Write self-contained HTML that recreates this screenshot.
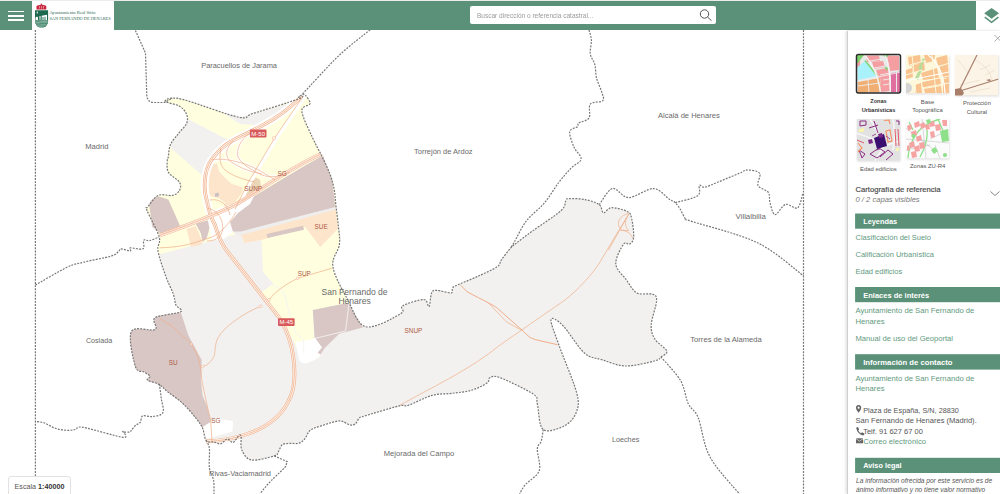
<!DOCTYPE html>
<html><head><meta charset="utf-8">
<style>
*{margin:0;padding:0;box-sizing:border-box}
html,body{width:1000px;height:494px;overflow:hidden;background:#fff;font-family:"Liberation Sans",sans-serif}
#map{position:absolute;left:0;top:0;width:1000px;height:494px}
#topline{position:absolute;left:0;top:0;width:1000px;height:1px;background:#ececec}
#hdr{position:absolute;left:0;top:1px;width:976px;height:29px;background:#5b9178}
#burger{position:absolute;left:8px;top:9.6px;width:16px;height:10px}
#burger i{position:absolute;left:0;width:16px;height:1.6px;background:#fff}
#logo{position:absolute;left:31.5px;top:1px;width:82px;height:29px;background:#fff}
#search{position:absolute;left:470px;top:5.2px;width:246px;height:17.8px;background:#fff;border-radius:2px}
#search span{position:absolute;left:6.5px;top:5.6px;font-size:7.3px;line-height:8px;color:#9a9a9a;white-space:nowrap;transform:scaleX(0.893);transform-origin:0 0}
#layersbtn{position:absolute;left:976px;top:1px;width:24px;height:29px;background:#fff}
#panel{position:absolute;left:847px;top:31px;width:153px;height:463px;background:#fff;border-left:1px solid #cfcfcf;box-shadow:-1px 0 3px rgba(0,0,0,.15)}
.t{position:absolute;white-space:nowrap;line-height:1}
.bar{position:absolute;left:8px;width:145px;height:15.2px;background:#5b9178;color:#fff;font-weight:bold;font-size:8.2px}
.bar span{position:absolute;left:8px;top:3.5px;white-space:nowrap}
.lnk{color:#5c9a7d;font-size:7.6px}
.gr{color:#555;font-size:7.6px}
</style></head><body>
<div id="map">
<svg width="1000" height="494" viewBox="0 0 1000 494">
<defs>
<style>
.bd{fill:none;stroke:#767676;stroke-width:1.2;stroke-dasharray:1.9 1.25}
.rd{fill:none;stroke:#f0ad88;stroke-width:0.7}
.rw{fill:none;stroke:#fff;stroke-linecap:round;stroke-linejoin:round}
.lb{font-family:"Liberation Sans",sans-serif;fill:#6a6a6a;font-size:7.5px}
.zl{font-family:"Liberation Sans",sans-serif;fill:#ad5a45;font-size:6.4px}
</style>
<clipPath id="lobeclip"><path d="M100,60 L400,60 L400,303 L349.3,303 L312.8,310.3 L314.7,337.6 L300,355.8 L292.6,339 L281.5,320.9 L270.3,304.7 L261.2,292.5 L273.4,283.4 L263.2,272.3 L261.5,240 L244.3,243 L241.2,232.9 L160.2,254.1 L100,270 Z"/></clipPath>
<clipPath id="suclip"><path d="M100,311 L180.6,311.8 L188.4,335.4 L201.7,360 L200.9,379.4 L202.5,395.6 L207.4,406.9 L210.6,419.9 L209.8,424.7 L204.1,426.3 L195,450 L100,450 Z"/></clipPath>
</defs>
<!-- municipality grey -->
<path id="muni" fill="#f2f1ef" d="M165.3,101.5 C164.1,100.2 168.5,98.2 172.4,98.1 C176.3,98.0 177.5,97.9 188.6,101.1 C199.7,104.3 228.4,115.3 239.2,117.3 C250.0,119.3 243.6,116.3 253.4,113.3 C263.2,110.3 289.8,102.2 298.0,99.1 C306.2,96.0 301.6,95.1 302.8,94.5 C304.1,93.9 304.3,93.9 305.5,95.4 C306.7,96.9 310.6,101.0 310.0,103.6 C309.4,106.2 301.5,105.4 301.8,110.9 C302.1,116.4 308.6,128.9 312.0,136.6 C315.4,144.2 319.1,150.4 322.2,156.8 C325.2,163.2 328.3,169.5 330.3,175.0 C332.3,180.5 333.4,185.1 334.3,190.0 C335.2,194.9 335.1,198.5 335.8,204.6 C336.5,210.7 337.8,219.7 338.4,226.4 C339.0,233.1 340.3,238.0 339.4,244.7 C338.5,251.4 331.5,257.4 332.9,266.5 C334.2,275.6 342.0,289.3 347.5,299.3 C353.0,309.3 356.8,324.3 365.7,326.7 C374.6,329.1 394.5,317.2 400.6,313.7 C406.8,310.2 398.8,308.3 402.6,305.9 C406.5,303.5 419.3,299.4 423.7,299.5 C428.1,299.6 427.7,307.7 429.0,306.6 C430.3,305.5 430.3,295.6 431.6,292.9 C432.9,290.2 433.5,290.3 436.8,290.3 C440.1,290.3 448.7,293.3 451.3,292.9 C453.9,292.4 451.1,289.1 452.6,287.6 C454.1,286.1 456.1,285.7 460.5,283.7 C464.9,281.7 472.9,278.6 479.0,275.8 C485.1,273.0 493.7,269.2 497.4,266.6 C501.1,264.0 499.1,263.1 501.3,260.0 C503.5,256.9 508.0,251.0 510.5,248.2 C513.0,245.4 512.6,246.0 516.3,243.1 C520.0,240.2 525.1,236.4 532.5,231.0 C539.9,225.6 555.3,215.8 560.9,210.7 C566.5,205.6 564.5,202.6 565.9,200.6 C567.2,198.6 565.8,198.8 569.0,198.6 C572.2,198.4 580.1,198.6 585.1,199.6 C590.1,200.6 596.2,202.5 599.3,204.7 C602.3,206.9 601.4,212.3 603.4,212.8 C605.4,213.3 607.5,207.9 611.5,207.7 C615.5,207.5 624.2,209.8 627.6,211.7 C631.0,213.5 630.7,214.6 631.7,218.8 C632.7,223.0 634.0,232.8 633.7,237.0 C633.4,241.2 631.4,242.9 629.7,244.1 C628.0,245.3 625.9,240.8 623.6,244.1 C621.3,247.4 615.3,258.1 615.8,264.0 C616.2,269.9 622.8,274.9 626.3,279.7 C629.8,284.5 632.4,290.5 636.8,292.9 C641.2,295.3 649.3,292.9 652.6,294.2 C655.9,295.5 656.8,295.7 656.6,300.8 C656.4,305.9 651.5,318.6 651.2,325.0 C650.9,331.4 652.4,334.9 655.0,339.2 C657.6,343.5 665.8,348.0 666.8,351.0 C667.8,354.0 663.0,355.4 661.0,357.0 C659.0,358.6 660.9,359.3 655.0,360.8 C649.1,362.3 634.4,366.2 625.6,366.0 C616.8,365.8 608.9,361.9 602.0,359.7 C595.1,357.5 590.9,358.7 584.4,353.0 C577.9,347.3 568.4,331.1 562.8,325.5 C557.2,319.9 551.6,316.4 551.0,319.6 C550.4,322.9 554.6,332.9 558.9,345.0 C563.1,357.1 573.6,381.1 576.5,392.2 C579.4,403.3 578.5,406.3 576.5,411.9 C574.5,417.5 570.3,422.7 564.8,425.6 C559.2,428.5 547.8,433.1 543.2,429.5 C538.6,425.9 538.9,409.9 537.3,404.0 C535.7,398.1 539.6,398.6 533.4,394.2 C527.2,389.8 507.2,380.4 500.0,377.7 C492.8,374.9 492.2,376.8 490.0,377.7 C487.8,378.6 490.1,380.9 487.0,383.0 C483.9,385.1 477.2,388.6 471.3,390.3 C465.4,392.0 458.2,392.5 451.6,393.4 C445.1,394.2 439.2,393.4 432.0,395.4 C424.8,397.4 414.1,403.4 408.5,405.2 C402.9,407.0 405.8,404.2 398.6,406.0 C391.4,407.8 371.8,413.8 365.3,415.8 C358.8,417.8 361.0,416.5 359.4,417.8 C357.8,419.1 357.1,422.5 355.5,423.7 C353.9,424.9 352.2,425.4 349.6,424.9 C347.0,424.4 344.3,420.8 339.7,420.9 C335.1,421.0 326.9,424.0 322.0,425.6 C317.1,427.2 313.2,428.0 310.3,430.3 C307.4,432.6 306.4,437.2 304.4,439.4 C302.4,441.6 300.8,442.6 298.5,443.3 C296.2,444.0 293.2,443.2 290.5,443.4 C287.8,443.6 284.4,443.2 282.4,444.6 C280.4,446.0 279.6,450.0 278.3,451.9 C277.0,453.8 278.8,454.5 274.3,455.9 C269.9,457.2 257.0,460.9 251.6,460.0 C246.2,459.1 243.7,454.1 241.9,450.2 C240.1,446.3 241.6,438.9 241.0,436.5 C240.4,434.1 239.9,435.0 238.6,436.0 C237.3,437.0 234.9,442.0 233.0,442.5 C231.1,443.0 229.3,438.7 227.3,438.9 C225.3,439.1 223.0,443.3 220.8,443.8 C218.6,444.3 216.7,442.7 214.3,442.1 C211.9,441.6 208.2,442.9 206.2,440.5 C204.2,438.1 204.2,431.7 202.5,428.0 C200.8,424.3 199.2,422.4 196.0,418.3 C192.8,414.2 187.7,408.0 183.1,403.7 C178.5,399.4 172.6,395.6 168.5,392.4 C164.4,389.2 162.3,386.3 158.8,384.3 C155.3,382.3 149.0,381.6 147.5,380.2 C146.0,378.8 150.5,377.5 150.0,376.2 C149.5,374.9 146.7,373.7 144.3,372.1 C141.9,370.5 137.6,373.3 135.4,366.5 C133.2,359.7 128.1,337.6 131.4,331.4 C134.7,325.2 151.1,331.8 155.0,329.5 C158.9,327.2 150.7,320.6 155.0,317.7 C159.3,314.8 177.1,313.9 180.6,311.8 C184.1,309.7 177.1,308.0 175.9,305.0 C174.7,302.0 175.0,298.8 173.3,294.0 C171.6,289.2 168.2,283.2 165.7,276.0 C163.1,268.8 159.1,257.4 158.0,250.9 C156.9,244.4 161.0,243.6 159.2,236.9 C157.4,230.2 148.9,215.7 147.1,210.6 C145.2,205.5 146.2,209.1 148.1,206.6 C149.9,204.1 154.1,197.3 158.2,195.4 C162.2,193.5 168.8,196.2 172.4,195.4 C176.0,194.6 178.3,192.6 179.5,190.4 C180.7,188.2 181.4,185.4 179.5,182.3 C177.6,179.2 170.3,175.8 168.3,172.1 C166.3,168.4 167.3,162.6 167.3,160.0 C167.3,157.4 167.8,159.4 168.3,156.8 C168.8,154.2 168.7,148.6 170.4,144.7 C172.1,140.8 175.8,137.1 178.5,133.5 C181.2,129.9 185.2,126.6 186.6,123.4 C187.9,120.2 187.8,117.2 186.6,114.3 C185.4,111.4 183.1,108.3 179.5,106.2 C175.9,104.1 166.5,102.8 165.3,101.5 Z"/>
<!-- yellow lobe -->
<path fill="#ffffe0" clip-path="url(#lobeclip)" d="M165.3,101.5 C164.1,100.2 168.5,98.2 172.4,98.1 C176.3,98.0 177.5,97.9 188.6,101.1 C199.7,104.3 228.4,115.3 239.2,117.3 C250.0,119.3 243.6,116.3 253.4,113.3 C263.2,110.3 289.8,102.2 298.0,99.1 C306.2,96.0 301.6,95.1 302.8,94.5 C304.1,93.9 304.3,93.9 305.5,95.4 C306.7,96.9 310.6,101.0 310.0,103.6 C309.4,106.2 301.5,105.4 301.8,110.9 C302.1,116.4 308.6,128.9 312.0,136.6 C315.4,144.2 319.1,150.4 322.2,156.8 C325.2,163.2 328.3,169.5 330.3,175.0 C332.3,180.5 333.4,185.1 334.3,190.0 C335.2,194.9 335.1,198.5 335.8,204.6 C336.5,210.7 337.8,219.7 338.4,226.4 C339.0,233.1 340.3,238.0 339.4,244.7 C338.5,251.4 331.5,257.4 332.9,266.5 C334.2,275.6 342.0,289.3 347.5,299.3 C353.0,309.3 356.8,324.3 365.7,326.7 C374.6,329.1 394.5,317.2 400.6,313.7 C406.8,310.2 398.8,308.3 402.6,305.9 C406.5,303.5 419.3,299.4 423.7,299.5 C428.1,299.6 427.7,307.7 429.0,306.6 C430.3,305.5 430.3,295.6 431.6,292.9 C432.9,290.2 433.5,290.3 436.8,290.3 C440.1,290.3 448.7,293.3 451.3,292.9 C453.9,292.4 451.1,289.1 452.6,287.6 C454.1,286.1 456.1,285.7 460.5,283.7 C464.9,281.7 472.9,278.6 479.0,275.8 C485.1,273.0 493.7,269.2 497.4,266.6 C501.1,264.0 499.1,263.1 501.3,260.0 C503.5,256.9 508.0,251.0 510.5,248.2 C513.0,245.4 512.6,246.0 516.3,243.1 C520.0,240.2 525.1,236.4 532.5,231.0 C539.9,225.6 555.3,215.8 560.9,210.7 C566.5,205.6 564.5,202.6 565.9,200.6 C567.2,198.6 565.8,198.8 569.0,198.6 C572.2,198.4 580.1,198.6 585.1,199.6 C590.1,200.6 596.2,202.5 599.3,204.7 C602.3,206.9 601.4,212.3 603.4,212.8 C605.4,213.3 607.5,207.9 611.5,207.7 C615.5,207.5 624.2,209.8 627.6,211.7 C631.0,213.5 630.7,214.6 631.7,218.8 C632.7,223.0 634.0,232.8 633.7,237.0 C633.4,241.2 631.4,242.9 629.7,244.1 C628.0,245.3 625.9,240.8 623.6,244.1 C621.3,247.4 615.3,258.1 615.8,264.0 C616.2,269.9 622.8,274.9 626.3,279.7 C629.8,284.5 632.4,290.5 636.8,292.9 C641.2,295.3 649.3,292.9 652.6,294.2 C655.9,295.5 656.8,295.7 656.6,300.8 C656.4,305.9 651.5,318.6 651.2,325.0 C650.9,331.4 652.4,334.9 655.0,339.2 C657.6,343.5 665.8,348.0 666.8,351.0 C667.8,354.0 663.0,355.4 661.0,357.0 C659.0,358.6 660.9,359.3 655.0,360.8 C649.1,362.3 634.4,366.2 625.6,366.0 C616.8,365.8 608.9,361.9 602.0,359.7 C595.1,357.5 590.9,358.7 584.4,353.0 C577.9,347.3 568.4,331.1 562.8,325.5 C557.2,319.9 551.6,316.4 551.0,319.6 C550.4,322.9 554.6,332.9 558.9,345.0 C563.1,357.1 573.6,381.1 576.5,392.2 C579.4,403.3 578.5,406.3 576.5,411.9 C574.5,417.5 570.3,422.7 564.8,425.6 C559.2,428.5 547.8,433.1 543.2,429.5 C538.6,425.9 538.9,409.9 537.3,404.0 C535.7,398.1 539.6,398.6 533.4,394.2 C527.2,389.8 507.2,380.4 500.0,377.7 C492.8,374.9 492.2,376.8 490.0,377.7 C487.8,378.6 490.1,380.9 487.0,383.0 C483.9,385.1 477.2,388.6 471.3,390.3 C465.4,392.0 458.2,392.5 451.6,393.4 C445.1,394.2 439.2,393.4 432.0,395.4 C424.8,397.4 414.1,403.4 408.5,405.2 C402.9,407.0 405.8,404.2 398.6,406.0 C391.4,407.8 371.8,413.8 365.3,415.8 C358.8,417.8 361.0,416.5 359.4,417.8 C357.8,419.1 357.1,422.5 355.5,423.7 C353.9,424.9 352.2,425.4 349.6,424.9 C347.0,424.4 344.3,420.8 339.7,420.9 C335.1,421.0 326.9,424.0 322.0,425.6 C317.1,427.2 313.2,428.0 310.3,430.3 C307.4,432.6 306.4,437.2 304.4,439.4 C302.4,441.6 300.8,442.6 298.5,443.3 C296.2,444.0 293.2,443.2 290.5,443.4 C287.8,443.6 284.4,443.2 282.4,444.6 C280.4,446.0 279.6,450.0 278.3,451.9 C277.0,453.8 278.8,454.5 274.3,455.9 C269.9,457.2 257.0,460.9 251.6,460.0 C246.2,459.1 243.7,454.1 241.9,450.2 C240.1,446.3 241.6,438.9 241.0,436.5 C240.4,434.1 239.9,435.0 238.6,436.0 C237.3,437.0 234.9,442.0 233.0,442.5 C231.1,443.0 229.3,438.7 227.3,438.9 C225.3,439.1 223.0,443.3 220.8,443.8 C218.6,444.3 216.7,442.7 214.3,442.1 C211.9,441.6 208.2,442.9 206.2,440.5 C204.2,438.1 204.2,431.7 202.5,428.0 C200.8,424.3 199.2,422.4 196.0,418.3 C192.8,414.2 187.7,408.0 183.1,403.7 C178.5,399.4 172.6,395.6 168.5,392.4 C164.4,389.2 162.3,386.3 158.8,384.3 C155.3,382.3 149.0,381.6 147.5,380.2 C146.0,378.8 150.5,377.5 150.0,376.2 C149.5,374.9 146.7,373.7 144.3,372.1 C141.9,370.5 137.6,373.3 135.4,366.5 C133.2,359.7 128.1,337.6 131.4,331.4 C134.7,325.2 151.1,331.8 155.0,329.5 C158.9,327.2 150.7,320.6 155.0,317.7 C159.3,314.8 177.1,313.9 180.6,311.8 C184.1,309.7 177.1,308.0 175.9,305.0 C174.7,302.0 175.0,298.8 173.3,294.0 C171.6,289.2 168.2,283.2 165.7,276.0 C163.1,268.8 159.1,257.4 158.0,250.9 C156.9,244.4 161.0,243.6 159.2,236.9 C157.4,230.2 148.9,215.7 147.1,210.6 C145.2,205.5 146.2,209.1 148.1,206.6 C149.9,204.1 154.1,197.3 158.2,195.4 C162.2,193.5 168.8,196.2 172.4,195.4 C176.0,194.6 178.3,192.6 179.5,190.4 C180.7,188.2 181.4,185.4 179.5,182.3 C177.6,179.2 170.3,175.8 168.3,172.1 C166.3,168.4 167.3,162.6 167.3,160.0 C167.3,157.4 167.8,159.4 168.3,156.8 C168.8,154.2 168.7,148.6 170.4,144.7 C172.1,140.8 175.8,137.1 178.5,133.5 C181.2,129.9 185.2,126.6 186.6,123.4 C187.9,120.2 187.8,117.2 186.6,114.3 C185.4,111.4 183.1,108.3 179.5,106.2 C175.9,104.1 166.5,102.8 165.3,101.5 Z"/>
<!-- grey stripes in lobe -->
<path fill="#f2f1ef" d="M186.6,118.3 L229,140.6 L218,150 L208,163 L203,176 L171.4,148.7 L170.4,144.7 L178.5,133.5 L186.6,123.4 Z"/>
<path fill="#f2f1ef" d="M223,113.3 L239.2,117.3 L253.4,113.3 L294,102 L288,108 L270,119 L255,125 L240,124 Z"/>
<!-- dark pink SG big -->
<path fill="#d9c7c5" d="M320.5,156.8 L323.2,156 L332.3,180.2 L335.3,207.6 L241.2,231.9 L233.1,231.9 C229,229 227.5,224 228.5,218 C229.5,213 232,209 236.5,206.5 L262,191.5 L280,180.5 L300,168.5 Z"/>
<path fill="#efeeed" d="M233,231.5 L241.2,231.4 L335.3,207 L336,211 L241.2,235.4 L236,235 Z"/>
<!-- orange SUE strip -->
<path fill="#fde5cc" d="M241.2,234.9 L335.8,209.6 L338,228.8 L320.2,247 L305,226.8 L261.5,240 L244.3,243 Z"/>
<path fill="#d9c7c5" d="M266.5,233.9 L303,225.8 L304,229.8 L267.5,237.9 Z"/>
<!-- small pink left -->
<path fill="#d9c7c5" d="M149.1,204 Q152,197 159.2,196.4 L168.3,199.5 L180.5,226.8 L161.3,233.9 L152.1,226.8 Z"/>
<!-- small pink center-left -->
<path fill="#d9c7c5" d="M195.7,223.8 L209.8,219.7 L209.8,226.8 L206.8,237.9 L202.8,242 L200.7,232.9 Z"/>
<!-- orange band left -->
<path fill="#fde5cc" d="M186.6,229 L195.7,226 L202.8,242 L200.7,245 L191,247 Z"/>
<!-- SUNP orange -->
<path fill="#fde5cc" d="M209.2,164.2 L217,163.5 L219,171.2 L224.7,177.6 L231.8,184 L237.5,185.4 L243.2,188.2 L242,192.5 L236,201 L227.6,208 L224,206.7 L224.7,202.4 L218.4,198.2 L212,198.5 L208.5,192 L208,175 Z"/>
<path fill="#ffffe0" d="M210,196 L218.4,198.2 L224.7,202.4 L224,206.7 L215,209 L210,207 Z"/>
<path fill="#c9c0c4" d="M214.8,193.5 L218.5,192.5 L219,196.2 L215.3,197 Z"/>
<path fill="#ebd6b8" d="M244.6,188.2 L255.9,177.6 L260,179.7 L260.9,185.4 L251.7,195.3 L243.9,199.6 Z"/>
<!-- dark pink lower (Henares) -->
<path fill="#d9c7c5" d="M312.8,310 L348.3,302.8 L362.9,327.4 L339.2,333.7 L324.6,348.3 L320.5,354.5 L317.5,352.5 L321.9,347.4 L314.6,337.4 Z"/>
<path fill="none" stroke="#f4f2f2" stroke-width="0.9" d="M349,303.5 L345.6,331 L314.6,338.5 L302,355"/>
<!-- white lower area near Henares -->
<path fill="#fff" d="M295.5,342 L312.8,339.2 L314.6,337.4 L321.9,347.4 L317.5,352.5 L321,355.6 C318,359 313,361 306,363.5 C302,364 299,361 298.5,357 C297.5,352 296.5,346 295.5,342 Z"/>
<path fill="none" stroke="#f5f5f2" stroke-width="1" d="M270,283.6 L281,289 C284,294 286,298 286.4,301.9 L290,316.4 L295.5,332.8 L303.7,340 L303.7,352.9"/>
<!-- SU dark pink -->
<path fill="#d9c7c5" clip-path="url(#suclip)" d="M165.3,101.5 C164.1,100.2 168.5,98.2 172.4,98.1 C176.3,98.0 177.5,97.9 188.6,101.1 C199.7,104.3 228.4,115.3 239.2,117.3 C250.0,119.3 243.6,116.3 253.4,113.3 C263.2,110.3 289.8,102.2 298.0,99.1 C306.2,96.0 301.6,95.1 302.8,94.5 C304.1,93.9 304.3,93.9 305.5,95.4 C306.7,96.9 310.6,101.0 310.0,103.6 C309.4,106.2 301.5,105.4 301.8,110.9 C302.1,116.4 308.6,128.9 312.0,136.6 C315.4,144.2 319.1,150.4 322.2,156.8 C325.2,163.2 328.3,169.5 330.3,175.0 C332.3,180.5 333.4,185.1 334.3,190.0 C335.2,194.9 335.1,198.5 335.8,204.6 C336.5,210.7 337.8,219.7 338.4,226.4 C339.0,233.1 340.3,238.0 339.4,244.7 C338.5,251.4 331.5,257.4 332.9,266.5 C334.2,275.6 342.0,289.3 347.5,299.3 C353.0,309.3 356.8,324.3 365.7,326.7 C374.6,329.1 394.5,317.2 400.6,313.7 C406.8,310.2 398.8,308.3 402.6,305.9 C406.5,303.5 419.3,299.4 423.7,299.5 C428.1,299.6 427.7,307.7 429.0,306.6 C430.3,305.5 430.3,295.6 431.6,292.9 C432.9,290.2 433.5,290.3 436.8,290.3 C440.1,290.3 448.7,293.3 451.3,292.9 C453.9,292.4 451.1,289.1 452.6,287.6 C454.1,286.1 456.1,285.7 460.5,283.7 C464.9,281.7 472.9,278.6 479.0,275.8 C485.1,273.0 493.7,269.2 497.4,266.6 C501.1,264.0 499.1,263.1 501.3,260.0 C503.5,256.9 508.0,251.0 510.5,248.2 C513.0,245.4 512.6,246.0 516.3,243.1 C520.0,240.2 525.1,236.4 532.5,231.0 C539.9,225.6 555.3,215.8 560.9,210.7 C566.5,205.6 564.5,202.6 565.9,200.6 C567.2,198.6 565.8,198.8 569.0,198.6 C572.2,198.4 580.1,198.6 585.1,199.6 C590.1,200.6 596.2,202.5 599.3,204.7 C602.3,206.9 601.4,212.3 603.4,212.8 C605.4,213.3 607.5,207.9 611.5,207.7 C615.5,207.5 624.2,209.8 627.6,211.7 C631.0,213.5 630.7,214.6 631.7,218.8 C632.7,223.0 634.0,232.8 633.7,237.0 C633.4,241.2 631.4,242.9 629.7,244.1 C628.0,245.3 625.9,240.8 623.6,244.1 C621.3,247.4 615.3,258.1 615.8,264.0 C616.2,269.9 622.8,274.9 626.3,279.7 C629.8,284.5 632.4,290.5 636.8,292.9 C641.2,295.3 649.3,292.9 652.6,294.2 C655.9,295.5 656.8,295.7 656.6,300.8 C656.4,305.9 651.5,318.6 651.2,325.0 C650.9,331.4 652.4,334.9 655.0,339.2 C657.6,343.5 665.8,348.0 666.8,351.0 C667.8,354.0 663.0,355.4 661.0,357.0 C659.0,358.6 660.9,359.3 655.0,360.8 C649.1,362.3 634.4,366.2 625.6,366.0 C616.8,365.8 608.9,361.9 602.0,359.7 C595.1,357.5 590.9,358.7 584.4,353.0 C577.9,347.3 568.4,331.1 562.8,325.5 C557.2,319.9 551.6,316.4 551.0,319.6 C550.4,322.9 554.6,332.9 558.9,345.0 C563.1,357.1 573.6,381.1 576.5,392.2 C579.4,403.3 578.5,406.3 576.5,411.9 C574.5,417.5 570.3,422.7 564.8,425.6 C559.2,428.5 547.8,433.1 543.2,429.5 C538.6,425.9 538.9,409.9 537.3,404.0 C535.7,398.1 539.6,398.6 533.4,394.2 C527.2,389.8 507.2,380.4 500.0,377.7 C492.8,374.9 492.2,376.8 490.0,377.7 C487.8,378.6 490.1,380.9 487.0,383.0 C483.9,385.1 477.2,388.6 471.3,390.3 C465.4,392.0 458.2,392.5 451.6,393.4 C445.1,394.2 439.2,393.4 432.0,395.4 C424.8,397.4 414.1,403.4 408.5,405.2 C402.9,407.0 405.8,404.2 398.6,406.0 C391.4,407.8 371.8,413.8 365.3,415.8 C358.8,417.8 361.0,416.5 359.4,417.8 C357.8,419.1 357.1,422.5 355.5,423.7 C353.9,424.9 352.2,425.4 349.6,424.9 C347.0,424.4 344.3,420.8 339.7,420.9 C335.1,421.0 326.9,424.0 322.0,425.6 C317.1,427.2 313.2,428.0 310.3,430.3 C307.4,432.6 306.4,437.2 304.4,439.4 C302.4,441.6 300.8,442.6 298.5,443.3 C296.2,444.0 293.2,443.2 290.5,443.4 C287.8,443.6 284.4,443.2 282.4,444.6 C280.4,446.0 279.6,450.0 278.3,451.9 C277.0,453.8 278.8,454.5 274.3,455.9 C269.9,457.2 257.0,460.9 251.6,460.0 C246.2,459.1 243.7,454.1 241.9,450.2 C240.1,446.3 241.6,438.9 241.0,436.5 C240.4,434.1 239.9,435.0 238.6,436.0 C237.3,437.0 234.9,442.0 233.0,442.5 C231.1,443.0 229.3,438.7 227.3,438.9 C225.3,439.1 223.0,443.3 220.8,443.8 C218.6,444.3 216.7,442.7 214.3,442.1 C211.9,441.6 208.2,442.9 206.2,440.5 C204.2,438.1 204.2,431.7 202.5,428.0 C200.8,424.3 199.2,422.4 196.0,418.3 C192.8,414.2 187.7,408.0 183.1,403.7 C178.5,399.4 172.6,395.6 168.5,392.4 C164.4,389.2 162.3,386.3 158.8,384.3 C155.3,382.3 149.0,381.6 147.5,380.2 C146.0,378.8 150.5,377.5 150.0,376.2 C149.5,374.9 146.7,373.7 144.3,372.1 C141.9,370.5 137.6,373.3 135.4,366.5 C133.2,359.7 128.1,337.6 131.4,331.4 C134.7,325.2 151.1,331.8 155.0,329.5 C158.9,327.2 150.7,320.6 155.0,317.7 C159.3,314.8 177.1,313.9 180.6,311.8 C184.1,309.7 177.1,308.0 175.9,305.0 C174.7,302.0 175.0,298.8 173.3,294.0 C171.6,289.2 168.2,283.2 165.7,276.0 C163.1,268.8 159.1,257.4 158.0,250.9 C156.9,244.4 161.0,243.6 159.2,236.9 C157.4,230.2 148.9,215.7 147.1,210.6 C145.2,205.5 146.2,209.1 148.1,206.6 C149.9,204.1 154.1,197.3 158.2,195.4 C162.2,193.5 168.8,196.2 172.4,195.4 C176.0,194.6 178.3,192.6 179.5,190.4 C180.7,188.2 181.4,185.4 179.5,182.3 C177.6,179.2 170.3,175.8 168.3,172.1 C166.3,168.4 167.3,162.6 167.3,160.0 C167.3,157.4 167.8,159.4 168.3,156.8 C168.8,154.2 168.7,148.6 170.4,144.7 C172.1,140.8 175.8,137.1 178.5,133.5 C181.2,129.9 185.2,126.6 186.6,123.4 C187.9,120.2 187.8,117.2 186.6,114.3 C185.4,111.4 183.1,108.3 179.5,106.2 C175.9,104.1 166.5,102.8 165.3,101.5 Z"/>
<!-- white SG lower -->
<path fill="#fff" d="M203,426.7 L216,418.6 L233,421 L232.5,431.6 L206.2,438.9 Z"/>
<!-- white road casings -->
<path class="rw" stroke-width="3" d="M250,133 C240,140 236,150 238,157 C242,165 252,170 262,175 C270,178 280,177 290,172 M233,141 C226,148 225,155 229,160 C235,166 250,172 262,174 M212,160 C220,158 232,160 245,164 C256,168 266,174 275,180"/>
<path fill="#fff" d="M206,212 L226,206 L240,202 L255,194 L250,204 L238,213 L230,222 L233,232 L222,240 L212,240 Z"/>
<path class="rw" stroke-width="8" d="M302,96 C292,106 282,114 273,119.3 C265,124 250,132 241,136.3 C233,140 222,147 216.7,153.3 C211,159 207,166 205.5,175 C204,185 205,195 206.8,200.5 C209,212 211,218 214.9,224.8"/>
<path class="rw" stroke-width="3.4" d="M159.7,235.5 C190,224 220,214 240,202 C260,190 290,168 321,154"/>
<path class="rw" stroke-width="3.5" d="M304,98 L276.5,138.2 L251,181 L237,209"/>
<!-- roads -->
<path fill="none" stroke="#f2b491" stroke-width="3.8" d="M302,96 C292,106 282,114 273,119.3 C265,124 250,132 241,136.3 C233,140 222,147 216.7,153.3 C211,159 207,166 205.5,175 C204,185 205,195 206.8,200.5 C209,212 211,218 214.9,224.8 C218,235 222,245 227,251 L261.2,294.5 C270,306 276,313 281.5,320.9 C288,333 291.6,345 293,355 C296,375 294,392 288,402 C279,420 262,430 241,436 C228,440 215,441 206,441.5"/>
<path fill="none" stroke="#fff" stroke-width="2.4" d="M302,96 C292,106 282,114 273,119.3 C265,124 250,132 241,136.3 C233,140 222,147 216.7,153.3 C211,159 207,166 205.5,175 C204,185 205,195 206.8,200.5 C209,212 211,218 214.9,224.8 C218,235 222,245 227,251 L261.2,294.5 C270,306 276,313 281.5,320.9 C288,333 291.6,345 293,355 C296,375 294,392 288,402 C279,420 262,430 241,436 C228,440 215,441 206,441.5" opacity=".9"/>
<path fill="none" stroke="#f2b491" stroke-width="0.9" d="M302,96 C292,106 282,114 273,119.3 C265,124 250,132 241,136.3 C233,140 222,147 216.7,153.3 C211,159 207,166 205.5,175 C204,185 205,195 206.8,200.5 C209,212 211,218 214.9,224.8 C218,235 222,245 227,251 L261.2,294.5 C270,306 276,313 281.5,320.9 C288,333 291.6,345 293,355 C296,375 294,392 288,402 C279,420 262,430 241,436 C228,440 215,441 206,441.5"/>

<path fill="none" stroke="#f2b491" stroke-width="4" d="M159.7,235.5 C190,224 220,214 240,202 C260,190 290,168 321,154"/>
<path fill="none" stroke="#fff" stroke-width="2.7" d="M159.7,235.5 C190,224 220,214 240,202 C260,190 290,168 321,154" opacity=".9"/><path fill="none" stroke="#f2b491" stroke-width="1.3" d="M159.7,235.5 C190,224 220,214 240,202 C260,190 290,168 321,154"/><path fill="none" stroke="#fff" stroke-width="0.4" d="M159.7,235.5 C190,224 220,214 240,202 C260,190 290,168 321,154" opacity=".7"/>

<g class="rd">
<path d="M302,98 L274.5,138.2 L249,181 L235,209"/>
<path d="M159.7,247.8 C175,247.5 190,245 201,240.5 C206,239 210,238 214,236 C224,230 230,222 236,212"/>
<path d="M250,133 C240,140 236,150 238,157 C242,165 252,170 262,175 C270,178 280,177 290,172"/>
<path d="M233,141 C226,148 225,155 229,160 C235,166 250,172 262,174 M221,148 C219,160 220,165 225,170 C232,176 245,180 255,182"/>
<path d="M212,160 C220,158 232,160 245,164 C256,168 266,174 275,180"/>
<path d="M207,208 C215,210 222,215 223,228 C222,238 214,241 207,241"/>
<path d="M210,200 C220,198 228,205 230,215"/>
<path d="M269.3,299.6 C275,292 283.5,285.4 297.7,278.3 L332,268.2"/>
<path d="M260.8,306.2 C252,310 244,314 236,320 C226,327 220,333 217,340 C214,348 216,354 213,358 C210,363 206,366 202.5,366.7"/>
<path d="M160,318.8 L172,325.9 L191.4,344.1 C199,355 201.7,370 201.7,380 L207.4,406.9 L210.6,419.9 L212,441"/>
<path d="M398.6,406 C430,388 470,370 500,345 L539,318 L565,300 C580,288 592,274.5 600,262 L616,235 L629,214"/>
<path d="M460,284.6 L467.3,291.9 C475,296 482,299.5 488.3,302.8 C492,305 495,306 497.4,308.3 L521,329.2 C525,333 528,336 530.1,337.4 C533,339 535,339.5 537.4,340.1 L557.5,344.7" style="stroke-width:1"/>
<path d="M488.3,302.8 L506.5,321.9 L521,330"/>
<path d="M628.4,213.5 C621,215 617,221 619,226.5 C620.5,230 624,231 629,230.5 M620.5,230.5 C626,230 630.5,233 633,238.5 M626.5,218 C624.5,223 625.5,228 629,230.5 M608.5,250 L629,213.5"/>
</g>
<g fill="#fff" stroke="#f0ad88" stroke-width="0.6">
<circle cx="273.9" cy="138.2" r="1.6"/>
<circle cx="260.8" cy="306.2" r="1.3"/>
<circle cx="268.9" cy="299.7" r="1.3"/>
<circle cx="297.7" cy="278.3" r="1.2"/>
<circle cx="202.5" cy="366.7" r="1.2"/>
<circle cx="191.4" cy="344.1" r="1"/>
</g>
<!-- boundaries -->
<g class="bd">
<path d="M35.4,30 L35.4,476"/>
<path d="M803.5,30 L803.5,494"/>
<path d="M135.4,30.4 L145.5,53.1 L146.8,96.2 C148,101 150,102.5 154,102.5 L164.5,102.5 L172.4,98.1"/>
<path d="M370.1,29.8 C365.0,34.0 350.4,44.7 339.2,55.3 C328.0,65.9 309.5,86.8 302.8,93.6 C296.1,100.4 299.7,95.8 299.1,96.3"/>
<path d="M165.3,101.5 C164.1,100.2 168.5,98.2 172.4,98.1 C176.3,98.0 177.5,97.9 188.6,101.1 C199.7,104.3 228.4,115.3 239.2,117.3 C250.0,119.3 243.6,116.3 253.4,113.3 C263.2,110.3 289.8,102.2 298.0,99.1 C306.2,96.0 301.6,95.1 302.8,94.5 C304.1,93.9 304.3,93.9 305.5,95.4 C306.7,96.9 310.6,101.0 310.0,103.6 C309.4,106.2 301.5,105.4 301.8,110.9 C302.1,116.4 308.6,128.9 312.0,136.6 C315.4,144.2 319.1,150.4 322.2,156.8 C325.2,163.2 328.3,169.5 330.3,175.0 C332.3,180.5 333.4,185.1 334.3,190.0 C335.2,194.9 335.1,198.5 335.8,204.6 C336.5,210.7 337.8,219.7 338.4,226.4 C339.0,233.1 340.3,238.0 339.4,244.7 C338.5,251.4 331.5,257.4 332.9,266.5 C334.2,275.6 342.0,289.3 347.5,299.3 C353.0,309.3 356.8,324.3 365.7,326.7 C374.6,329.1 394.5,317.2 400.6,313.7 C406.8,310.2 398.8,308.3 402.6,305.9 C406.5,303.5 419.3,299.4 423.7,299.5 C428.1,299.6 427.7,307.7 429.0,306.6 C430.3,305.5 430.3,295.6 431.6,292.9 C432.9,290.2 433.5,290.3 436.8,290.3 C440.1,290.3 448.7,293.3 451.3,292.9 C453.9,292.4 451.1,289.1 452.6,287.6 C454.1,286.1 456.1,285.7 460.5,283.7 C464.9,281.7 472.9,278.6 479.0,275.8 C485.1,273.0 493.7,269.2 497.4,266.6 C501.1,264.0 499.1,263.1 501.3,260.0 C503.5,256.9 508.0,251.0 510.5,248.2 C513.0,245.4 512.6,246.0 516.3,243.1 C520.0,240.2 525.1,236.4 532.5,231.0 C539.9,225.6 555.3,215.8 560.9,210.7 C566.5,205.6 564.5,202.6 565.9,200.6 C567.2,198.6 565.8,198.8 569.0,198.6 C572.2,198.4 580.1,198.6 585.1,199.6 C590.1,200.6 596.2,202.5 599.3,204.7 C602.3,206.9 601.4,212.3 603.4,212.8 C605.4,213.3 607.5,207.9 611.5,207.7 C615.5,207.5 624.2,209.8 627.6,211.7 C631.0,213.5 630.7,214.6 631.7,218.8 C632.7,223.0 634.0,232.8 633.7,237.0 C633.4,241.2 631.4,242.9 629.7,244.1 C628.0,245.3 625.9,240.8 623.6,244.1 C621.3,247.4 615.3,258.1 615.8,264.0 C616.2,269.9 622.8,274.9 626.3,279.7 C629.8,284.5 632.4,290.5 636.8,292.9 C641.2,295.3 649.3,292.9 652.6,294.2 C655.9,295.5 656.8,295.7 656.6,300.8 C656.4,305.9 651.5,318.6 651.2,325.0 C650.9,331.4 652.4,334.9 655.0,339.2 C657.6,343.5 665.8,348.0 666.8,351.0 C667.8,354.0 663.0,355.4 661.0,357.0 C659.0,358.6 660.9,359.3 655.0,360.8 C649.1,362.3 634.4,366.2 625.6,366.0 C616.8,365.8 608.9,361.9 602.0,359.7 C595.1,357.5 590.9,358.7 584.4,353.0 C577.9,347.3 568.4,331.1 562.8,325.5 C557.2,319.9 551.6,316.4 551.0,319.6 C550.4,322.9 554.6,332.9 558.9,345.0 C563.1,357.1 573.6,381.1 576.5,392.2 C579.4,403.3 578.5,406.3 576.5,411.9 C574.5,417.5 570.3,422.7 564.8,425.6 C559.2,428.5 547.8,433.1 543.2,429.5 C538.6,425.9 538.9,409.9 537.3,404.0 C535.7,398.1 539.6,398.6 533.4,394.2 C527.2,389.8 507.2,380.4 500.0,377.7 C492.8,374.9 492.2,376.8 490.0,377.7 C487.8,378.6 490.1,380.9 487.0,383.0 C483.9,385.1 477.2,388.6 471.3,390.3 C465.4,392.0 458.2,392.5 451.6,393.4 C445.1,394.2 439.2,393.4 432.0,395.4 C424.8,397.4 414.1,403.4 408.5,405.2 C402.9,407.0 405.8,404.2 398.6,406.0 C391.4,407.8 371.8,413.8 365.3,415.8 C358.8,417.8 361.0,416.5 359.4,417.8 C357.8,419.1 357.1,422.5 355.5,423.7 C353.9,424.9 352.2,425.4 349.6,424.9 C347.0,424.4 344.3,420.8 339.7,420.9 C335.1,421.0 326.9,424.0 322.0,425.6 C317.1,427.2 313.2,428.0 310.3,430.3 C307.4,432.6 306.4,437.2 304.4,439.4 C302.4,441.6 300.8,442.6 298.5,443.3 C296.2,444.0 293.2,443.2 290.5,443.4 C287.8,443.6 284.4,443.2 282.4,444.6 C280.4,446.0 279.6,450.0 278.3,451.9 C277.0,453.8 278.8,454.5 274.3,455.9 C269.9,457.2 257.0,460.9 251.6,460.0 C246.2,459.1 243.7,454.1 241.9,450.2 C240.1,446.3 241.6,438.9 241.0,436.5 C240.4,434.1 239.9,435.0 238.6,436.0 C237.3,437.0 234.9,442.0 233.0,442.5 C231.1,443.0 229.3,438.7 227.3,438.9 C225.3,439.1 223.0,443.3 220.8,443.8 C218.6,444.3 216.7,442.7 214.3,442.1 C211.9,441.6 208.2,442.9 206.2,440.5 C204.2,438.1 204.2,431.7 202.5,428.0 C200.8,424.3 199.2,422.4 196.0,418.3 C192.8,414.2 187.7,408.0 183.1,403.7 C178.5,399.4 172.6,395.6 168.5,392.4 C164.4,389.2 162.3,386.3 158.8,384.3 C155.3,382.3 149.0,381.6 147.5,380.2 C146.0,378.8 150.5,377.5 150.0,376.2 C149.5,374.9 146.7,373.7 144.3,372.1 C141.9,370.5 137.6,373.3 135.4,366.5 C133.2,359.7 128.1,337.6 131.4,331.4 C134.7,325.2 151.1,331.8 155.0,329.5 C158.9,327.2 150.7,320.6 155.0,317.7 C159.3,314.8 177.1,313.9 180.6,311.8 C184.1,309.7 177.1,308.0 175.9,305.0 C174.7,302.0 175.0,298.8 173.3,294.0 C171.6,289.2 168.2,283.2 165.7,276.0 C163.1,268.8 159.1,257.4 158.0,250.9 C156.9,244.4 161.0,243.6 159.2,236.9 C157.4,230.2 148.9,215.7 147.1,210.6 C145.2,205.5 146.2,209.1 148.1,206.6 C149.9,204.1 154.1,197.3 158.2,195.4 C162.2,193.5 168.8,196.2 172.4,195.4 C176.0,194.6 178.3,192.6 179.5,190.4 C180.7,188.2 181.4,185.4 179.5,182.3 C177.6,179.2 170.3,175.8 168.3,172.1 C166.3,168.4 167.3,162.6 167.3,160.0 C167.3,157.4 167.8,159.4 168.3,156.8 C168.8,154.2 168.7,148.6 170.4,144.7 C172.1,140.8 175.8,137.1 178.5,133.5 C181.2,129.9 185.2,126.6 186.6,123.4 C187.9,120.2 187.8,117.2 186.6,114.3 C185.4,111.4 183.1,108.3 179.5,106.2 C175.9,104.1 166.5,102.8 165.3,101.5 Z"/>
<path d="M35.4,285.0 C40.7,282.1 59.0,271.1 67.0,267.3 C75.0,263.5 76.1,264.1 83.5,262.2 C90.9,260.3 105.4,257.9 111.3,256.0 C117.2,254.1 117.4,252.1 119.0,250.9 C120.6,249.7 119.1,248.8 121.0,248.8 C122.9,248.8 128.7,251.1 130.3,250.9 C131.9,250.7 128.4,248.2 130.5,247.8 C132.6,247.5 140.8,250.1 143.0,248.8 C145.2,247.5 142.6,241.5 143.7,240.2 C144.8,238.8 146.7,241.2 149.3,240.7 C151.9,240.2 157.5,237.6 159.2,237.0"/>
<path d="M158.8,384.3 C158.9,384.6 159.2,383.5 159.6,385.9 C160.0,388.3 160.8,394.4 161.3,398.8 C161.9,403.2 164.4,409.6 162.9,412.6 C161.4,415.6 155.8,416.1 152.4,416.6 C149.0,417.1 144.7,414.9 142.7,415.8 C140.7,416.8 141.4,420.7 140.2,422.3 C139.0,423.9 136.9,424.1 135.4,425.5 C133.9,426.9 132.2,429.3 131.3,430.4 C130.4,431.5 131.0,431.7 129.7,432.0 C128.3,432.3 124.3,432.1 123.2,432.0 C122.1,431.9 123.1,430.7 123.1,431.6 C123.1,432.5 129.8,438.0 123.1,437.3 C116.4,436.6 90.9,428.6 82.9,427.3 C75.0,426.0 78.1,429.0 75.4,429.5 C72.7,430.0 69.9,430.5 66.6,430.3 C63.2,430.1 59.1,429.6 55.3,428.3 C51.5,427.1 47.4,423.9 44.0,422.8 C40.6,421.7 36.7,421.7 35.2,421.5"/>
<path d="M206.2,440.5 C206.7,441.9 208.9,444.0 209.4,448.6 C209.9,453.2 208.7,462.8 209.4,468.0 C210.1,473.2 212.7,475.7 213.5,480.0 C214.3,484.3 213.9,491.7 214.0,494.0"/>
<path d="M274.3,455.9 L287.2,461.6 L285.6,466.5 C280,473 270,480 260,494"/>
<path d="M589.0,30.0 C589.4,31.7 591.2,36.3 591.4,40.3 C591.6,44.3 589.7,50.0 590.3,54.0 C590.9,58.0 593.8,60.5 594.8,64.5 C595.8,68.5 595.5,73.7 596.6,78.3 C597.8,82.9 600.7,88.3 601.7,92.0 C602.7,95.7 604.7,98.7 602.8,100.7 C600.9,102.7 592.6,101.2 590.3,104.1 C588.0,107.0 591.0,114.8 589.0,118.0 C587.0,121.2 580.5,121.6 578.6,123.0 C576.7,124.4 579.1,125.1 577.6,126.6 C576.1,128.0 570.3,128.3 569.7,131.7 C569.1,135.1 572.1,142.6 574.0,147.2 C575.9,151.8 581.6,155.6 581.1,159.1 C580.6,162.6 574.7,164.3 571.0,168.2 C567.3,172.1 563.2,176.7 558.8,182.4 C554.4,188.1 550.1,196.2 544.7,202.6 C539.3,209.0 531.5,214.3 526.4,220.9 C521.3,227.5 516.9,237.6 514.3,242.1 C511.6,246.6 511.1,247.2 510.5,248.2"/>
<path d="M599.3,204.7 C601.5,202.0 607.6,189.7 612.5,188.5 C617.4,187.3 621.9,197.6 628.7,197.6 C635.5,197.6 646.7,188.4 653.4,188.6 C660.1,188.8 665.4,196.7 669.0,199.0 C672.6,201.3 673.4,200.9 675.3,202.7 C677.2,204.5 678.8,206.9 680.5,209.6 C682.2,212.3 683.6,216.9 685.6,218.9 C687.6,220.9 680.4,217.6 692.5,221.6 C704.6,225.6 739.5,233.9 758.0,243.0 C776.5,252.1 796.1,270.5 803.7,276.0"/>
<path d="M675.3,202.7 C679.0,201.5 693.7,198.7 697.7,195.8 C701.7,192.9 698.2,186.9 699.4,185.5 C700.5,184.1 701.5,187.8 704.6,187.2 C707.8,186.6 712.6,184.3 718.3,182.0 C724.0,179.7 734.1,175.4 739.0,173.4 C743.9,171.4 744.1,170.0 747.6,170.0 C751.1,170.0 758.0,170.8 759.7,173.4 C761.4,176.0 756.6,182.3 758.0,185.5 C759.4,188.7 766.3,189.5 768.3,192.4 C770.3,195.3 768.9,199.0 770.0,202.7 C771.1,206.4 772.4,214.4 775.0,214.7 C777.6,215.0 781.8,205.5 785.5,204.4 C789.2,203.3 794.6,209.6 797.5,207.9 C800.4,206.2 801.8,196.3 802.7,194.0"/>
<path d="M661.0,357.0 C664.2,360.9 675.9,372.7 680.5,380.5 C685.1,388.3 685.4,397.8 688.4,404.0 C691.4,410.2 694.6,408.9 698.2,417.7 C701.8,426.5 703.1,444.3 710.0,457.0 C716.9,469.7 734.5,487.8 739.4,494.0"/>
<path d="M543.2,429.5 C542.9,431.5 542.2,438.1 541.2,441.3 C540.2,444.6 537.6,444.1 537.3,449.0 C537.0,453.9 541.2,464.8 539.2,470.7 C537.2,476.6 528.8,480.6 525.5,484.5 C522.2,488.4 520.6,492.4 519.6,494.0"/>
</g>
<!-- labels -->
<text class="lb" x="201.2" y="67.5" style="font-size:7.42px">Paracuellos de Jarama</text>
<text class="lb" x="85.2" y="149.2" style="font-size:7.62px">Madrid</text>
<text class="lb" x="414" y="153.8" style="font-size:7.47px">Torrejón de Ardoz</text>
<text class="lb" x="658" y="118.3" style="font-size:7.55px">Alcalá de Henares</text>
<text class="lb" x="735.6" y="218.6" style="font-size:7.82px">Villalbilla</text>
<text class="lb" x="690.3" y="342.4" style="font-size:7.61px">Torres de la Alameda</text>
<text class="lb" x="85.9" y="343.1" style="font-size:7.17px">Coslada</text>
<text class="lb" x="611.9" y="442.1" style="font-size:7.25px">Loeches</text>
<text class="lb" x="383.7" y="456.3" style="font-size:7.62px">Mejorada del Campo</text>
<text class="lb" x="209.1" y="476.1" style="font-size:7.44px">Rivas-Vaciamadrid</text>
<text class="lb" x="321.5" y="295.3" style="font-size:8.55px">San Fernando de</text>
<text class="lb" x="338.4" y="303.6" style="font-size:8.55px">Henares</text>
<text class="zl" x="404.5" y="333.3">SNUP</text>
<text class="zl" x="297.7" y="275.6">SUP</text>
<text class="zl" x="314.5" y="228.7">SUE</text>
<text class="zl" x="277.6" y="176.1">SG</text>
<text class="zl" x="244.3" y="190.6">SUNP</text>
<text class="zl" x="168.8" y="365.2">SU</text>
<text class="zl" x="211.2" y="423.3">SG</text>
<rect x="249.9" y="129.5" width="16.6" height="8.1" rx="1" fill="#d85a5b"/>
<text x="258.2" y="135.9" text-anchor="middle" style="font-family:'Liberation Sans',sans-serif;font-size:6px;fill:#fff">M-50</text>
<rect x="278" y="318.2" width="16.6" height="7.7" rx="1" fill="#d85a5b"/>
<text x="286.3" y="324.4" text-anchor="middle" style="font-family:'Liberation Sans',sans-serif;font-size:6px;fill:#fff">M-45</text>

</svg>
</div>
<div id="scale" style="position:absolute;left:8px;top:475.5px;width:62.5px;height:22px;background:#fff;border:1px solid #e2e2e2;border-radius:3px"><span style="position:absolute;left:5.5px;top:5.5px;font-size:7.2px;color:#555;white-space:nowrap">Escala <b style="color:#333">1:40000</b></span></div>
<div id="topline"></div>
<div id="hdr">
  <div id="burger"><i style="top:0"></i><i style="top:4.5px"></i><i style="top:8.8px"></i></div>
  <div id="search"><span>Buscar dirección o referencia catastral...</span>
  <svg style="position:absolute;left:228px;top:2px" width="16" height="14" viewBox="0 0 16 14"><circle cx="6.5" cy="6" r="4.2" fill="none" stroke="#555" stroke-width="1"/><line x1="9.5" y1="9" x2="13.5" y2="12.7" stroke="#555" stroke-width="1"/></svg>
  </div>
</div>
<div id="logo"><svg width="82" height="29" viewBox="31.5 1 82 29">
<circle cx="40.9" cy="4.2" r="0.7" fill="#c8283c"/>
<path fill="#c8283c" d="M36,8.2 C35.6,6.2 36.6,5.2 38,5.4 C39,4.6 42.8,4.6 43.8,5.4 C45.2,5.2 46.2,6.2 45.8,8.2 L45.8,9.6 L36,9.6 Z"/>
<path fill="#f4c9cf" d="M38.6,6 L39.2,6 L39.2,8.6 L38.6,8.6 Z M40.6,6 L41.2,6 L41.2,8.6 L40.6,8.6 Z M42.6,6 L43.2,6 L43.2,8.6 L42.6,8.6 Z"/>
<path fill="#1e6a50" d="M34.5,10.2 L47.6,10.2 L47.6,20.5 C47.6,25.2 44.8,27.6 41.05,27.6 C37.3,27.6 34.5,25.2 34.5,20.5 Z"/>
<path fill="#ffffff" d="M36.3,11.5 L37.3,11.5 L37.3,13.5 L36.3,13.5 Z M35,17.5 L36.5,16.5 L37.5,17.5 L37.5,20 L35,20 Z M38.5,16.5 L40.5,16.5 L40.5,20 L38.5,20 Z M41.2,15.8 L46.5,14.8 L46.5,20 L41.2,20 Z"/>
<path fill="#2e7a5e" d="M38.9,17.2 L40.1,17.2 L40.1,20 L38.9,20 Z M42,17 L43,17 L43,20 L42,20 Z M44,16.8 L45,16.8 L45,20 L44,20 Z"/>
<path fill="#a9cbbb" d="M34.6,20.6 L47.5,20.6 C47.4,25 44.6,27.4 41.05,27.4 C37.5,27.4 34.7,25 34.6,20.6 Z"/>
<path fill="none" stroke="#1e6a50" stroke-width="0.7" d="M34.8,21.8 C38,21 43,23 47.4,21.8 M35.1,23.3 C38,22.6 43,24.4 47.1,23.3 M35.7,24.8 C38.5,24.1 43,25.7 46.4,24.8 M36.8,26.2 C39,25.6 42.5,26.8 45.3,26.2"/>
<text x="48.9" y="14" textLength="45.9" lengthAdjust="spacingAndGlyphs" style="font-family:'Liberation Serif',serif;font-size:4.5px;fill:#2a6a52">Ayuntamiento Real Sitio</text>
<text x="48.9" y="19.5" textLength="61.2" lengthAdjust="spacingAndGlyphs" style="font-family:'Liberation Serif',serif;font-size:4.3px;fill:#2a6a52">SAN FERNANDO DE HENARES</text>
</svg></div>
<div id="layersbtn"></div>
<div id="panel"></div>
<svg id="side" style="position:absolute;left:0;top:0" width="1000" height="494" viewBox="0 0 1000 494">
<defs>
<style>
.st{font-family:"Liberation Sans",sans-serif}
.tl{font-size:5.9px;fill:#555}
.lk{font-size:7.6px;fill:#5f9a80}
.tx{font-size:7.6px;fill:#555}
.bt{font-size:7.5px;fill:#fff;font-weight:bold}
</style>
<clipPath id="c1"><rect x="856.2" y="54.2" width="44.6" height="39" rx="1.5"/></clipPath>
<clipPath id="c2"><rect x="906" y="55" width="43" height="38.5"/></clipPath>
<clipPath id="c3"><rect x="955" y="55" width="43.5" height="40.5"/></clipPath>
<clipPath id="c4"><rect x="856.7" y="119" width="43.3" height="41.6"/></clipPath>
<clipPath id="c5"><rect x="906" y="119" width="43" height="39.6"/></clipPath>
<filter id="sh" x="-20%" y="-20%" width="140%" height="140%"><feGaussianBlur stdDeviation="0.8"/></filter>
</defs>
<!-- thumb shadows -->
<rect x="906.5" y="56" width="43" height="38.5" fill="#000" opacity=".12" filter="url(#sh)"/>
<rect x="955.5" y="56" width="43.5" height="40.5" fill="#000" opacity=".12" filter="url(#sh)"/>
<rect x="857.2" y="120" width="43.3" height="41.6" fill="#000" opacity=".12" filter="url(#sh)"/>
<rect x="906.5" y="120" width="43" height="39.6" fill="#000" opacity=".12" filter="url(#sh)"/>
<!-- thumb1 -->
<g clip-path="url(#c1)">
<rect x="856" y="54" width="45" height="40" fill="#e9e9e9"/>
<path fill="#f49ea2" d="M866,55.5 L879,55.5 L880,61 L867,62 Z M872,62 L883,61 L885,67 L874,69 Z M876,70 L887,68 L891,76 L879,78 Z M887,55.5 L899,56 L899,70 L890,71 Z M856.5,56 L860,56 L860,66 L856.5,68 Z"/>
<path fill="#aaf2fb" d="M857.5,67 L865,61 L877,76 L858,80 Z"/>
<path fill="none" stroke="#7fd46f" stroke-width="1.4" d="M865,60.5 L877,75.5"/>
<path fill="#7fd46f" d="M856.5,55 L864,55 L858,63 L856.5,63 Z M883,55 L889,55 L886,58 Z M884,66 L888,68 L887,71 Z"/>
<path fill="#f0ae72" d="M858,82 L880,78 L881,92 L858,93 Z"/>
<path fill="#f49ea2" d="M880,75 L889,73.5 L890,91 L881,92 Z"/>
<path fill="#e06fa0" d="M891,73 L896,72.5 L896,92 L891,92 Z M897,72 L900.5,71.5 L900.5,92 L897,92 Z"/>
<path fill="none" stroke="#eeeeee" stroke-width="0.9" d="M858,86 L880,83 M868,80 L869,93 M883,80 L889,79 M883,85 L889,84 M870,61 L882,59 M874,68 L885,66 M880,75 L890,73 M857,81.5 L901,72"/><path fill="none" stroke="#f3f3f3" stroke-width="1.5" d="M865,55 C872,64 878,74 880.5,93 M885,55 C888,62 890,68 890.3,93"/>
</g>
<rect x="856.5" y="54.5" width="44" height="38.4" rx="1.8" fill="none" stroke="#2b2b2b" stroke-width="1.5"/>
<!-- thumb2 -->
<g clip-path="url(#c2)">
<rect x="906" y="55" width="43" height="38.5" fill="#fdf8dc"/>
<path fill="#f8c38f" d="M908,57 L920,55 L921,63 L909,66 Z M912,66 L924,62 L925,70 L913,73 Z M906,70 L912,68 L913,77 L906,79 Z M924,55 L935,55 L934,61 L926,63 Z M936,58 L947,55 L948,63 L938,66 Z M939,67 L948,64 L949,78 L942,78 Z M921,73 L937,68 L939,78 L923,80 Z M922,82 L940,78 L941,85 L923,88 Z M915,85 L921,83 L922,93 L915,93 Z M924,89 L941,86 L942,93 L925,93 Z M943,79 L949,78 L949,93 L943,93 Z"/>
<path fill="#b9dc9b" d="M915,78 L921,66 L923,67 L918,80 Z M918,68 L923,58 L925,59 L920,70 Z"/>
<circle cx="907" cy="88" r="5" fill="#d4d4d4"/>
<path fill="none" stroke="#fdf8dc" stroke-width="1" d="M906,66 L924,61 M906,75 L922,70 M920,82 L949,76 M922,88 L949,83 M912,55 L916,93 M932,55 L936,93"/><path fill="none" stroke="#fff" stroke-width="1.2" d="M906,81 L949,72 M928,55 C938,62 944,75 945,93"/>
</g>
<!-- thumb3 -->
<g clip-path="url(#c3)">
<rect x="955" y="55" width="43.5" height="40.5" fill="#fcf4e6"/>
<path fill="none" stroke="#d8cbb8" stroke-width="0.4" d="M958,60 L970,75 M975,60 C985,65 990,72 992,80 M980,70 L990,65 M985,75 L995,70 M960,85 L980,80 M970,92 L990,88"/>
<path fill="none" stroke="#a97f6c" stroke-width="1.2" d="M977,55 L960,89 M960,91 L998.5,79"/>
<path fill="#a97f6c" d="M955,89 L961,88 L964,93 L962,96 L955,96 Z M986,80 L990,79 L991,82 Z"/>
</g>
<!-- thumb4 -->
<g clip-path="url(#c4)">
<rect x="856.7" y="119" width="43.3" height="41.6" fill="#e2e2e2"/>
<path fill="none" stroke="#f6f6f6" stroke-width="1.6" d="M856,133 C866,136 876,140 884,146 M870,119 C876,128 880,136 884,146 M884,146 L900,141 M884,146 L875,161 M893,119 C895,130 895,140 893,150"/>
<path fill="none" stroke="#8b2c85" stroke-width="1" d="M874,121 L878,133 M869,128 L878,125 M860,121 L866,121 L866,125 L860,126 Z M870,154 L879,148 L885,152 L877,158 Z M880,157 L888,150 L893,154 L886,160 M896,121 L899,121 L899,125 M859,150 L865,154 L862,158 Z"/>
<path fill="none" stroke="#f79060" stroke-width="1.1" d="M884,120.5 L889,120 L890,124 M886,131 L890,130 L892,141 L888,142 Z M858,143 L862,148 L858,152"/>
<path fill="none" stroke="#e04a5b" stroke-width="0.9" d="M895,129 L896,146 M898,129 L899,146 M857,140 L864,143"/>
<path fill="#3b0f6f" d="M874,138 L884,134 L887,146 L877,149 Z"/>
<path fill="#7a2a84" d="M878,134 L882,133 L883,137 L879,138 Z M868,140 L872,139 L873,143 L869,144 Z"/>
<path fill="none" stroke="#8b2c85" stroke-width="0.8" d="M872,136 L876,134 M886,136 L890,139 M876,150 L880,149"/>
<path fill="#f9f5b0" d="M859,129 L864,128 L864,132 L859,132 Z M896,148 L899,148 L899,151 L896,151 Z"/>
</g>
<!-- thumb5 -->
<g clip-path="url(#c5)">
<rect x="906" y="119" width="43" height="39.6" fill="#fbfbfb"/>
<path fill="none" stroke="#9a9a9a" stroke-width="0.35" d="M906,139 L949,143 M922,119 L926,158.6 M906,128 L934,150 M930,139 L949,130 M935,145 L940,158.6 M906,150 L930,145"/>
<path fill="none" stroke="#8fe08a" stroke-width="1.3" d="M908,158 C909,146 914,134 924,126 C930,122 936,120 940,119 M920,157 C925,148 928,140 927,130 M938,119 L946,138 M909,122 L913,130"/>
<path fill="#f5a3a3" d="M907,126 L911,124 L912,129 L908,131 Z M911,132 L916,130 L917,135 L912,137 Z M914,123 L919,121 L920,126 L915,128 Z M920,124 L924,122 L926,127 L921,129 Z M925,125 L929,124 L930,129 L926,130 Z M916,137 L921,135 L922,140 L917,142 Z M929,122 L934,121 L935,126 L930,127 Z M935,125 L940,124 L941,130 L936,131 Z M942,120 L947,120 L947,126 L943,126 Z M909,143 L914,141 L915,147 L910,148 Z M914,147 L919,145 L920,151 L915,152 Z M919,143 L924,142 L925,148 L920,149 Z M911,152 L916,151 L917,157 L912,158 Z M930,132 L934,131 L935,137 L931,138 Z M907,146 L909,145 L910,150 L907,151 Z"/>
<path fill="#8fe08a" d="M940,131 L948,129 L949,141 L942,142 Z M931,150 L935,147 L938,151 L934,154 Z M926,120 L930,119 L931,123 L927,123 Z"/>
<circle cx="913.5" cy="136" r="2.1" fill="#8fe08a"/>
<circle cx="945" cy="155" r="2.1" fill="#8fe08a"/>
</g>
<!-- thumb labels -->
<text class="st tl" x="878.5" y="102.6" text-anchor="middle" style="font-weight:bold;font-size:5.6px;fill:#333">Zonas</text>
<text class="st tl" x="878.5" y="111.5" text-anchor="middle" style="font-weight:bold;font-size:5.6px;fill:#333">Urbanísticas</text>
<text class="st tl" x="927.5" y="103.7" text-anchor="middle">Base</text>
<text class="st tl" x="927.5" y="112.1" text-anchor="middle">Topográfica</text>
<text class="st tl" x="977" y="105.4" text-anchor="middle">Protección</text>
<text class="st tl" x="977" y="114.1" text-anchor="middle">Cultural</text>
<text class="st tl" x="878.4" y="171.1" text-anchor="middle">Edad edificios</text>
<text class="st tl" x="927.7" y="168.4" text-anchor="middle">Zonas ZU-R4</text>
<text class="st tx" x="855.5" y="192" style="font-size:7.65px;fill:#4a4a4a;stroke:#4a4a4a;stroke-width:0.18px">Cartografía de referencia</text>
<text class="st tx" x="855.5" y="202.2" style="font-size:7.6px;font-style:italic;fill:#777">0 / 2 capas visibles</text>
<path d="M990.5,191.5 L995,195.5 L999.5,191.5" fill="none" stroke="#666" stroke-width="0.8"/>
<!-- bars -->
<rect x="855.1" y="213.5" width="145" height="15.2" fill="#5b9178"/>
<text class="st bt" x="863.2" y="224" style="font-size:7.37px">Leyendas</text>
<text class="st lk" x="855.5" y="239.7" style="font-size:7.5px">Clasificación del Suelo</text>
<text class="st lk" x="855.5" y="256.7" style="font-size:7.5px">Calificación Urbanística</text>
<text class="st lk" x="855.5" y="273.5" style="font-size:7.5px">Edad edificios</text>
<rect x="855.1" y="287" width="145" height="15.2" fill="#5b9178"/>
<text class="st bt" x="863.2" y="297.5" style="font-size:7.52px">Enlaces de interés</text>
<text class="st lk" x="855.5" y="313.4" style="font-size:7.68px">Ayuntamiento de San Fernando de</text>
<text class="st lk" x="855.5" y="323.5" style="font-size:7.68px">Henares</text>
<text class="st lk" x="855.5" y="340.6" style="font-size:7.6px">Manual de uso del Geoportal</text>
<rect x="855.1" y="354.2" width="145" height="15.4" fill="#5b9178"/>
<text class="st bt" x="863.2" y="364.8" style="font-size:7.7px">Información de contacto</text>
<text class="st lk" x="855.5" y="381" style="font-size:7.68px">Ayuntamiento de San Fernando de</text>
<text class="st lk" x="855.5" y="391.2" style="font-size:7.68px">Henares</text>
<!-- address -->
<path fill="#666" fill-rule="evenodd" d="M858.6,412.8 C857.2,410.8 856,409.3 856,407.7 A2.6,2.6 0 0 1 861.2,407.7 C861.2,409.3 860,410.8 858.6,412.8 Z M858.6,406.6 A1.05,1.05 0 1 0 858.61,406.6 Z"/>
<text class="st tx" x="863.2" y="412.5" style="font-size:7.3px">Plaza de España, S/N, 28830</text>
<text class="st tx" x="855.5" y="423" style="font-size:7.56px">San Fernando de Henares (Madrid).</text>
<path fill="#666" d="M856.3,427.5 L858,427 L859.2,429.5 L858.3,430.5 C858.8,431.7 859.8,432.7 861,433.2 L862,432.3 L864.4,433.5 L864,435.3 C860,435.5 856.3,431.5 856.3,427.5 Z"/>
<text class="st tx" x="863.2" y="433.5" style="font-size:7.5px">Telf. 91 627 67 00</text>
<path fill="#666" d="M856,438.3 L863,438.3 L863,443.3 L856,443.3 Z"/>
<path fill="none" stroke="#fff" stroke-width="0.6" d="M856,438.6 L859.5,441.2 L863,438.6"/>
<text class="st lk" x="863.2" y="444.1" style="font-size:7.7px">Correo electrónico</text>
<rect x="855.1" y="457.8" width="145" height="15.2" fill="#5b9178"/>
<text class="st bt" x="863.2" y="468.3" style="font-size:7.34px">Aviso legal</text>
<text class="st" x="856.1" y="483" style="font-size:6.58px;font-style:italic;fill:#555">La información ofrecida por este servicio es de</text>
<text class="st" x="856.1" y="491.5" style="font-size:6.58px;font-style:italic;fill:#555">ánimo informativo y no tiene valor normativo</text>
<!-- close X -->
<path d="M994.5,35 L1001,41.5 M1001,35 L994.5,41.5" stroke="#999" stroke-width="0.8"/>
<!-- layers icon -->
<path fill="#5b9178" d="M991.6,7.9 L999,13.3 L991.6,18.7 L984.2,13.3 Z"/>
<path fill="none" stroke="#5b9178" stroke-width="1.6" d="M984.8,17.2 L991.6,22.3 L998.4,17.2"/>
</svg>

</body></html>
